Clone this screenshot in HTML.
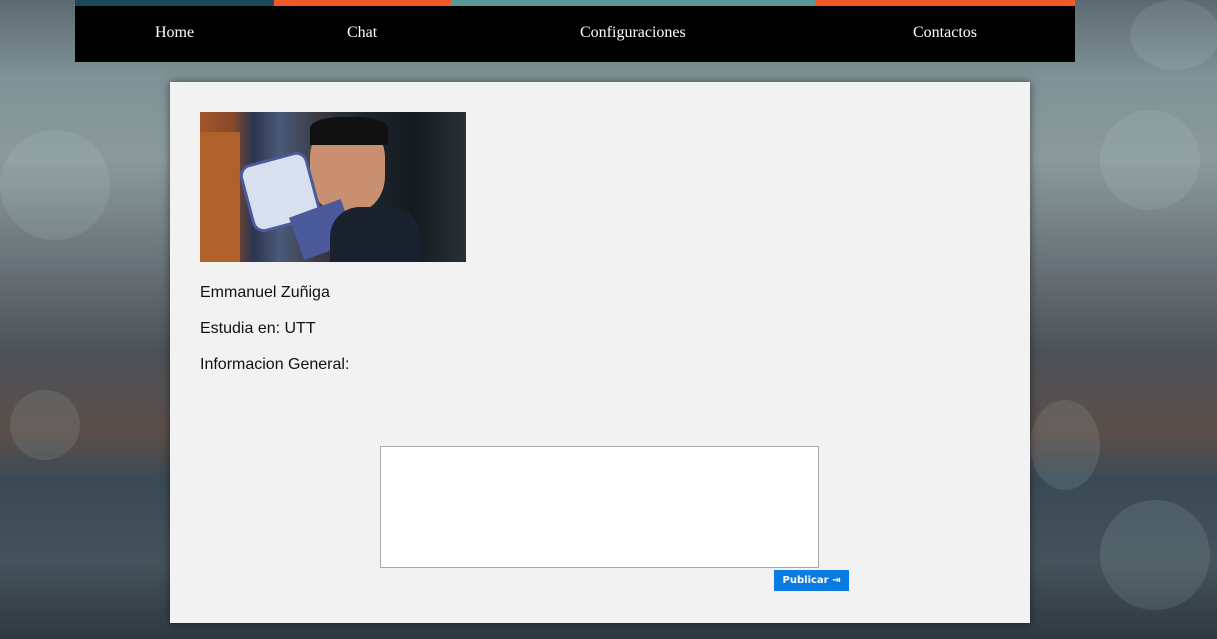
<!DOCTYPE html>
<html><head><meta charset="utf-8"><style>
*{margin:0;padding:0;box-sizing:border-box}
body{width:1217px;height:639px;overflow:hidden;position:relative;font-family:"Liberation Sans",sans-serif;
background:linear-gradient(180deg,#5c6a70 0%,#7f9296 12%,#8a9a9c 25%,#6f7a80 38%,#4d5258 55%,#5b4e4a 68%,#3a4a55 75%,#44535c 88%,#2f3840 100%);}
.glow{position:absolute;border-radius:50%;background:rgba(200,220,220,0.12)}
.bars{position:absolute;top:0;left:75px;width:1000px;height:6px;display:flex}
.nav{position:absolute;top:6px;left:75px;width:1000px;height:56px;background:#000;color:#fff;font-family:"Liberation Serif",serif;font-size:16px}
.nav span{position:absolute;top:18px}
.card{position:absolute;left:170px;top:82px;width:860px;height:541px;background:#f2f2f2;box-shadow:0 0 8px rgba(0,0,0,0.5)}
.photo{position:absolute;left:30px;top:30px;width:266px;height:150px;background:linear-gradient(90deg,#a0552a 0%,#8a4a2a 12%,#2a3550 20%,#4a5a7a 30%,#3a3a40 45%,#1e2830 60%,#151a20 80%,#2a3035 100%);overflow:hidden}
.p{position:absolute;left:30px;font-size:16px;color:#111}
textarea{position:absolute;left:210px;top:364px;width:439px;height:122px;border:1px solid #a9a9a9;background:#fff;resize:none}
.btn{position:absolute;left:604px;top:488px;width:75px;height:21px;background:#0a7be0;color:#fff;font-size:10px;font-weight:bold;font-family:"DejaVu Sans",sans-serif;text-align:center;line-height:21px}
</style></head><body>
<div class="glow" style="left:1100px;top:110px;width:100px;height:100px"></div>
<div class="glow" style="left:1100px;top:500px;width:110px;height:110px"></div>
<div class="glow" style="left:1030px;top:400px;width:70px;height:90px"></div>
<div class="glow" style="left:10px;top:390px;width:70px;height:70px"></div>
<div class="glow" style="left:0px;top:130px;width:110px;height:110px"></div>
<div class="glow" style="left:1130px;top:0px;width:90px;height:70px"></div>
<div class="bars"><div style="width:199px;background:#1a4a5a"></div><div style="width:177px;background:#f05a28"></div><div style="width:364px;background:#5a9a96"></div><div style="width:260px;background:#f05a28"></div></div>
<div class="nav"><span style="left:80px">Home</span><span style="left:272px">Chat</span><span style="left:505px">Configuraciones</span><span style="left:838px">Contactos</span></div>
<div class="card">
<div class="photo">
<div style="position:absolute;left:0;top:20px;width:40px;height:130px;background:#b0602a"></div>
<div style="position:absolute;left:110px;top:10px;width:75px;height:90px;border-radius:40%;background:#c89070"></div>
<div style="position:absolute;left:110px;top:5px;width:78px;height:28px;border-radius:40% 40% 0 0;background:#111"></div>
<div style="position:absolute;left:45px;top:45px;width:70px;height:70px;border-radius:12px;background:#d8e0f0;border:3px solid #4a5a9a;transform:rotate(-15deg)"></div>
<div style="position:absolute;left:95px;top:95px;width:55px;height:45px;background:#4a5a9a;transform:rotate(-20deg)"></div>
<div style="position:absolute;left:130px;top:95px;width:90px;height:60px;border-radius:30px 30px 0 0;background:#1a2230"></div>
</div>
<div class="p" style="top:202px">Emmanuel Zuñiga</div>
<div class="p" style="top:238px">Estudia en: UTT</div>
<div class="p" style="top:274px">Informacion General:</div>
<textarea></textarea>
<div class="btn">Publicar ⇥</div>
</div>
</body></html>
